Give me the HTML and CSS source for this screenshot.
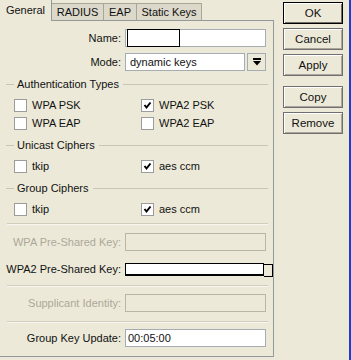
FILE: index.html
```html
<!DOCTYPE html>
<html lang="en">
<head>
  <meta charset="UTF-8">
  <title>Security Profile</title>
  <link rel="stylesheet" href="styles.css">
</head>
<body>
  <div class="window">
    <div class="main">
      <div class="tabs">
        <div class="tab active w-general">General</div>
        <div class="tab w-radius">RADIUS</div>
        <div class="tab w-eap">EAP</div>
        <div class="tab w-static">Static Keys</div>
        <div class="tab-fill"></div>
      </div>

      <div class="panel">
        <div class="row">
          <label>Name:</label>
          <div class="field"><span class="redact"></span></div>
        </div>
        <div class="row mt6">
          <label>Mode:</label>
          <div class="select">
            <span class="select-value">dynamic keys</span>
            <span class="select-btn">
              <svg width="8" height="8" viewBox="0 0 8 8"><rect x="0" y="0" width="8" height="2" fill="#000"/><polygon points="0,3 8,3 4,7.5" fill="#000"/></svg>
            </span>
          </div>
        </div>

        <div class="legend"><span>Authentication Types</span></div>
        <div class="checks">
          <div class="check"><span class="box"></span>WPA PSK</div>
          <div class="check"><span class="box"><svg width="11" height="11" viewBox="0 0 11 11"><polyline points="2.5,5 4.5,7.5 8.5,2.5" fill="none" stroke="#000" stroke-width="2"/></svg></span>WPA2 PSK</div>
          <div class="check"><span class="box"></span>WPA EAP</div>
          <div class="check"><span class="box"></span>WPA2 EAP</div>
        </div>

        <div class="legend"><span>Unicast Ciphers</span></div>
        <div class="checks">
          <div class="check"><span class="box"></span>tkip</div>
          <div class="check"><span class="box"><svg width="11" height="11" viewBox="0 0 11 11"><polyline points="2.5,5 4.5,7.5 8.5,2.5" fill="none" stroke="#000" stroke-width="2"/></svg></span>aes ccm</div>
        </div>

        <div class="legend"><span>Group Ciphers</span></div>
        <div class="checks">
          <div class="check"><span class="box"></span>tkip</div>
          <div class="check"><span class="box"><svg width="11" height="11" viewBox="0 0 11 11"><polyline points="2.5,5 4.5,7.5 8.5,2.5" fill="none" stroke="#000" stroke-width="2"/></svg></span>aes ccm</div>
        </div>

        <div class="sep mt5"></div>
        <div class="row disabled mt8">
          <label>WPA Pre-Shared Key:</label>
          <div class="field"></div>
        </div>
        <div class="row mt9">
          <label>WPA2 Pre-Shared Key:</label>
          <div class="secret"><span class="secret-main"></span><span class="secret-tail"></span></div>
        </div>
        <div class="sep mt7"></div>
        <div class="row disabled mt7">
          <label>Supplicant Identity:</label>
          <div class="field"></div>
        </div>
        <div class="sep mt9"></div>
        <div class="row mt6">
          <label>Group Key Update:</label>
          <div class="field">00:05:00</div>
        </div>
      </div>
    </div>

    <div class="buttons">
      <button class="btn default">OK</button>
      <button class="btn">Cancel</button>
      <button class="btn">Apply</button>
      <button class="btn gap">Copy</button>
      <button class="btn">Remove</button>
    </div>
  </div>
</body>
</html>
```

FILE: styles.css
```css
body {
  margin: 0;
  background: #ECE9D8;
  font: 11px "Liberation Sans", Arial, sans-serif;
  color: #111;
}
.window {
  display: flex;
  width: 349px; height: 360px;
  border-right: 2px solid #1E3CD0;
}
.main { width: 274px; }

/* tabs */
.tabs { display: flex; align-items: flex-end; height: 21px; }
.tab {
  box-sizing: border-box;
  height: 18px; line-height: 16px; text-align: center;
  background: #DCD8CA;
  border-top: 1px solid #A9A696;
  border-right: 1px solid #A9A696;
  border-bottom: 1px solid #919B9C;
}
.tab.active {
  height: 21px; line-height: 20px;
  background: #ECE9D8;
  border-top: none;
  border-bottom: none;
  border-right: 1px solid #919B9C;
}
.w-general { width: 52px; }
.w-radius { width: 52px; }
.w-eap { width: 33px; }
.w-static { width: 65px; }
.tab-fill { flex: 1; border-bottom: 1px solid #919B9C; }

/* panel */
.panel {
  box-sizing: border-box;
  height: 336px;
  padding-top: 8px;
  border-right: 1px solid #919B9C;
  border-bottom: 1px solid #919B9C;
}
.row {
  display: grid;
  grid-template-columns: 121px 141px;
  column-gap: 4px;
  height: 18px;
  align-items: center;
}
.row label { text-align: right; white-space: nowrap; }
.row.disabled label { color: #ACA899; }
.field {
  box-sizing: border-box;
  height: 18px; line-height: 16px;
  padding-left: 2px;
  background: #fff;
  border: 1px solid #A5ACB2;
}
.row.disabled .field { background: #ECE9D8; border-color: #B9B6A7; }
.redact {
  display: block; box-sizing: border-box;
  width: 53px; height: 18px;
  margin: -1px 0 0 -1px;
  border: 1px solid #000;
}
.select { display: flex; height: 18px; }
.select-value {
  box-sizing: border-box; flex: 1;
  line-height: 16px; padding-left: 4px;
  background: #fff; border: 1px solid #A5ACB2;
}
.select-btn {
  box-sizing: border-box; width: 19px; margin-left: 2px;
  display: flex; align-items: center; justify-content: center;
  border: 1px solid #A5ACB2;
}
.secret { display: flex; height: 18px; align-items: flex-start; }
.secret-main {
  flex: none;
  box-sizing: border-box; width: 139px; height: 13px; margin-top: 3px;
  background: #fff;
  border: 1px solid #000; border-bottom-width: 2px;
}
.secret-tail {
  flex: none;
  box-sizing: border-box; width: 9px; height: 13px; margin-top: 4px;
  border: 1px solid #000; border-left: none;
}

/* groups */
.legend {
  display: flex; align-items: center;
  height: 14px; margin: 6px 5px 0 6px;
}
.legend::before { content: ""; width: 8px; border-top: 1px solid #C9C6B6; margin-right: 3px; }
.legend::after { content: ""; flex: 1; border-top: 1px solid #C9C6B6; margin-left: 4px; }
.checks {
  display: grid;
  grid-template-columns: 127px 1fr;
  grid-auto-rows: 18px;
  margin-top: 5px; padding-left: 14px;
}
.check { display: flex; align-items: center; gap: 5px; }
.box {
  box-sizing: border-box; width: 13px; height: 13px;
  background: #fff; border: 1px solid #9C9C9C;
  display: flex;
}
.sep {
  margin: 0 5px 0 7px;
  border-top: 1px solid #D0CDBD;
  border-bottom: 1px solid #F7F6F0;
}
.mt5 { margin-top: 5px; }
.mt6 { margin-top: 6px; }
.mt7 { margin-top: 7px; }
.mt8 { margin-top: 8px; }
.mt9 { margin-top: 9px; }

/* buttons */
.buttons {
  display: flex; flex-direction: column; gap: 4px;
  width: 60px; margin-left: 9px; padding-top: 2px;
}
.btn {
  height: 22px; padding: 0;
  font: 11.5px "Liberation Sans", Arial, sans-serif;
  color: #111;
  background: #ECE9D8;
  border: 1px solid #6F6F6F;
  box-shadow: inset 1px 1px #fff, inset -1px -1px #ACA899;
}
.btn.default { border-color: #000; box-shadow: inset 1px 1px #fff, inset -1px -1px #716F64; }
.btn.gap { margin-top: 6px; }
```
